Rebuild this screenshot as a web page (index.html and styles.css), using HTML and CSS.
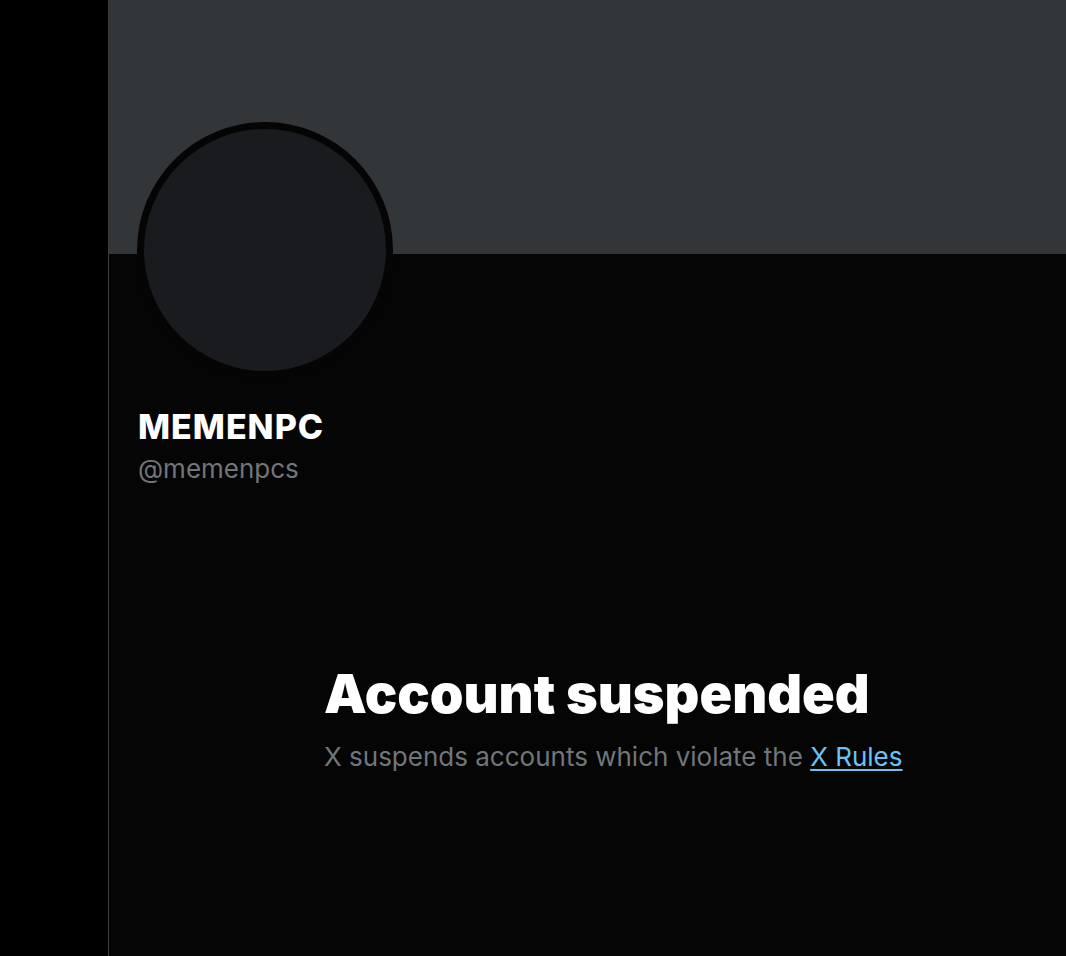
FILE: index.html
```html
<!DOCTYPE html>
<html lang="en">
<head>
<meta charset="utf-8">
<title>MEMENPC (@memenpcs) / X</title>
<link rel="stylesheet" href="styles.css">
</head>
<body>
<div class="app">
  <div class="side"></div>
  <main class="main">
    <div class="banner"></div>
    <div class="profile">
      <div class="avatar"><div class="avatar-inner"></div></div>
      <div class="name">MEMENPC</div>
      <div class="handle">@memenpcs</div>
    </div>
    <div class="empty">
      <h1 class="empty-title">Account suspended</h1>
      <p class="empty-text">X suspends accounts which violate the <a href="#" class="link">X Rules</a></p>
    </div>
  </main>
</div>
</body>
</html>
```

FILE: styles.css
```css
html, body {
  margin: 0;
  padding: 0;
  background: #000;
  height: 100%;
}
body {
  font-family: "Inter", "Roboto", "Liberation Sans", sans-serif;
  color: #e7e9ea;
  overflow: hidden;
}
.app {
  display: flex;
  min-height: 956px;
}
.side {
  width: 108px;
  flex: none;
  background: #000;
  border-right: 1px solid #3a3c3f;
}
.main {
  flex: 1;
  background: #050505;
  display: flex;
  flex-direction: column;
}
.banner {
  height: 254px;
  background: #333639;
}
.profile {
  padding-left: 28px;
  display: flex;
  flex-direction: column;
}
.avatar {
  width: 256px;
  height: 256px;
  margin-top: -132px;
  border-radius: 50%;
  background: #050505;
  display: flex;
  align-items: center;
  justify-content: center;
}
.avatar-inner {
  width: 242px;
  height: 242px;
  border-radius: 50%;
  background: #1a1b1f;
}
.name {
  margin-top: 29px;
  padding-left: 1px;
  font-size: 34px;
  font-weight: 800;
  line-height: 40px;
  color: #fff;
  letter-spacing: 1px;
}
.handle {
  margin-top: 6px;
  padding-left: 1px;
  font-size: 26px;
  line-height: 32px;
  color: #71767b;
}
.empty {
  padding-left: 215px;
  margin-top: 177px;
}
.empty-title {
  margin: 0;
  font-size: 54px;
  font-weight: 900;
  line-height: 64px;
  color: #fff;
  letter-spacing: 0;
}
.empty-text {
  margin: 15px 0 0;
  font-size: 26px;
  line-height: 32px;
  color: #71767b;
}
.link {
  color: #6cc1f7;
  text-decoration: underline;
  text-underline-offset: 3px;
}
```
